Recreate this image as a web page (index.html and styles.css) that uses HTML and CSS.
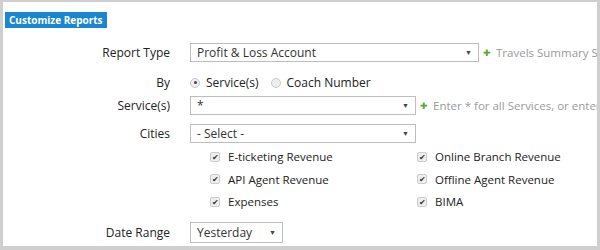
FILE: index.html
```html
<!DOCTYPE html>
<html>
<head>
<meta charset="utf-8">
<link rel="stylesheet" href="styles.css">
</head>
<body>
<div class="frame">
  <div class="tab">Customize Reports</div>
  <div class="form">
    <div class="row r-type">
      <div class="label">Report Type</div>
      <div class="field">
        <div class="select wide">Profit &amp; Loss Account<span class="caret">▼</span></div>
        <span class="hint"><span class="plus">✚</span>Travels Summary Serv</span>
      </div>
    </div>
    <div class="row r-by">
      <div class="label">By</div>
      <div class="field radios">
        <label class="radio"><span class="dot on"></span>Service(s)</label>
        <label class="radio"><span class="dot"></span>Coach Number</label>
      </div>
    </div>
    <div class="row r-svc">
      <div class="label">Service(s)</div>
      <div class="field">
        <div class="select mid">*<span class="caret">▼</span></div>
        <span class="hint"><span class="plus">✚</span>Enter * for all Services, or enter a ma</span>
      </div>
    </div>
    <div class="row r-city">
      <div class="label">Cities</div>
      <div class="field">
        <div class="select mid">- Select -<span class="caret">▼</span></div>
      </div>
    </div>
    <div class="checks">
      <label class="check"><span class="box">✔</span>E-ticketing Revenue</label>
      <label class="check"><span class="box">✔</span>Online Branch Revenue</label>
      <label class="check"><span class="box">✔</span>API Agent Revenue</label>
      <label class="check"><span class="box">✔</span>Offline Agent Revenue</label>
      <label class="check"><span class="box">✔</span>Expenses</label>
      <label class="check"><span class="box">✔</span>BIMA</label>
    </div>
    <div class="row r-date">
      <div class="label">Date Range</div>
      <div class="field">
        <div class="select small">Yesterday<span class="caret">▼</span></div>
      </div>
    </div>
  </div>
</div>
</body>
</html>
```

FILE: styles.css
```css
html, body {
  margin: 0;
  padding: 0;
  background: #fff;
}
body {
  font-family: "Open Sans", "Noto Sans", sans-serif;
  color: #222;
  font-size: 12px;
}
.frame {
  width: 600px;
  height: 250px;
  box-sizing: border-box;
  border-style: solid;
  border-color: #cfcfcf;
  border-width: 2px 3px 4px 3px;
  overflow: hidden;
  background: #fff;
}
.tab {
  display: inline-block;
  margin: 10px 0 0 2px;
  background: #1a86d0;
  color: #fff;
  font-weight: 700;
  font-size: 10px;
  line-height: 16px;
  padding: 0 4px;
}
.form {
  margin-top: 15px;
}
.row {
  display: grid;
  grid-template-columns: 167px 1fr;
  column-gap: 20px;
  align-items: center;
  white-space: nowrap;
}
.label {
  text-align: right;
  color: #222;
}
.field {
  display: flex;
  align-items: center;
  gap: 4px;
  overflow: hidden;
}
.select {
  position: relative;
  flex: none;
  box-sizing: border-box;
  height: 19px;
  line-height: 17px;
  border: 1px solid #bdbdbd;
  padding: 0 6px;
  color: #333;
  font-size: 12px;
  background: #fff;
}
.caret {
  position: absolute;
  right: 6px;
  top: 0;
  font-size: 7px;
  color: #444;
}
.wide { width: 289px; }
.mid { width: 226px; }
.small { width: 93px; height: 21px; line-height: 19px; }
.hint {
  flex: none;
  color: #9a9a9a;
  font-size: 11.5px;
  display: flex;
  align-items: center;
}
.plus {
  color: #5aa829;
  font-size: 9px;
  margin-right: 5px;
}
.r-by { margin-top: 12px; }
.r-svc { margin-top: 5px; }
.r-city { margin-top: 9px; }
.r-date { margin-top: 12px; }
.radios {
  gap: 12px;
}
.radio {
  display: flex;
  align-items: center;
  gap: 6px;
  color: #222;
}
.dot {
  width: 10px;
  height: 10px;
  border-radius: 50%;
  border: 1px solid #c8c8c8;
  background: #eee;
  box-sizing: border-box;
  display: inline-block;
  position: relative;
}
.dot.on::after {
  content: "";
  position: absolute;
  left: 2.5px;
  top: 2.5px;
  width: 3px;
  height: 3px;
  border-radius: 50%;
  background: #444;
}
.checks {
  display: grid;
  grid-template-columns: 207px 1fr;
  row-gap: 5.5px;
  margin: 5px 0 0 207px;
  white-space: nowrap;
  font-size: 11.5px;
}
.check {
  display: flex;
  align-items: center;
  gap: 8px;
  line-height: 17px;
}
.box {
  width: 10px;
  height: 10px;
  box-sizing: border-box;
  border: 1px solid #ccc;
  background: #eee;
  border-radius: 2px;
  font-size: 8px;
  line-height: 8px;
  text-align: center;
  color: #333;
}
```
